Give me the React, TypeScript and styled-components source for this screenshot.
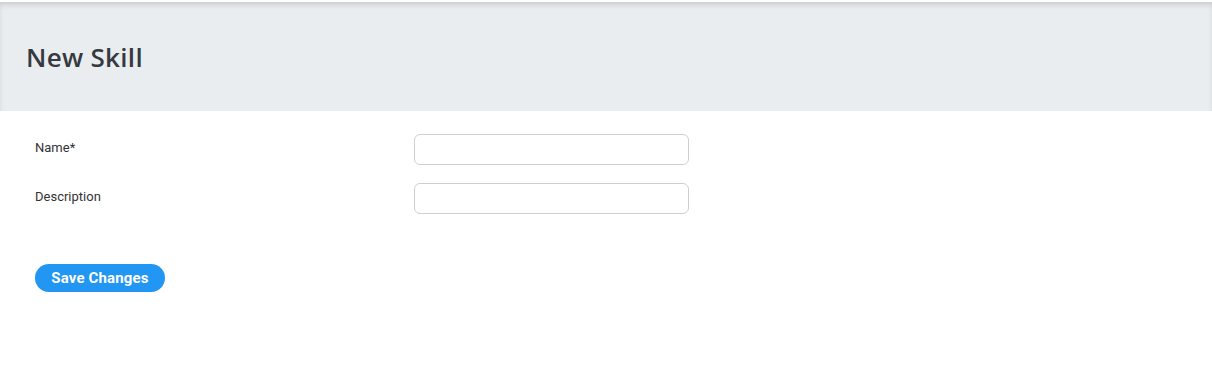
import React from "react";
import styled, { createGlobalStyle } from "styled-components";

const Global = createGlobalStyle`
  html, body { margin: 0; padding: 0; background: #ffffff; }
  body { font-family: Roboto, "Liberation Sans", Arial, sans-serif; }
  * { box-sizing: border-box; }
`;

const Page = styled.div`
  padding-top: 2px;
  min-height: 369px;
  background: #fff;
`;

const Header = styled.header`
  height: 109px;
  background: #eaedf0;
  box-shadow: inset 0 4px 6px -2px rgba(0, 0, 0, 0.16);
  display: flex;
  align-items: center;
  padding: 0 0 0 26px;
`;

const Title = styled.h1`
  margin: 0;
  font-family: "Open Sans", "Noto Sans", sans-serif;
  font-weight: 600;
  font-size: 26px;
  color: #343a40;
  letter-spacing: 0.3px;
`;

const Form = styled.form`
  padding: 23px 0 0 35px;
  display: flex;
  flex-direction: column;
  gap: 18px;
`;

const Row = styled.div`
  display: flex;
  align-items: flex-start;
`;

const Label = styled.label`
  width: 379px;
  font-size: 13px;
  line-height: 16px;
  color: #333;
  padding-top: 6px;
`;

const Input = styled.input`
  width: 275px;
  height: 31px;
  border: 1px solid #cfcfcf;
  border-radius: 6px;
  background: #fff;
  font-family: Roboto, sans-serif;
  font-size: 13px;
  padding: 0 10px;
  outline: none;
`;

const Actions = styled.div`
  padding-top: 32px;
`;

const Button = styled.button`
  height: 28px;
  width: 130px;
  border: none;
  border-radius: 14px;
  background: #2196f3;
  color: #fff;
  font-family: Roboto, sans-serif;
  font-weight: 700;
  font-size: 15px;
  letter-spacing: 0.15px;
  padding: 0;
  cursor: pointer;
`;

export default function App() {
  return (
    <Page>
      <Global />
      <Header>
        <Title>New Skill</Title>
      </Header>
      <Form onSubmit={(e) => e.preventDefault()}>
        <Row>
          <Label>Name*</Label>
          <Input type="text" />
        </Row>
        <Row>
          <Label>Description</Label>
          <Input type="text" />
        </Row>
        <Actions>
          <Button type="submit">Save Changes</Button>
        </Actions>
      </Form>
    </Page>
  );
}
